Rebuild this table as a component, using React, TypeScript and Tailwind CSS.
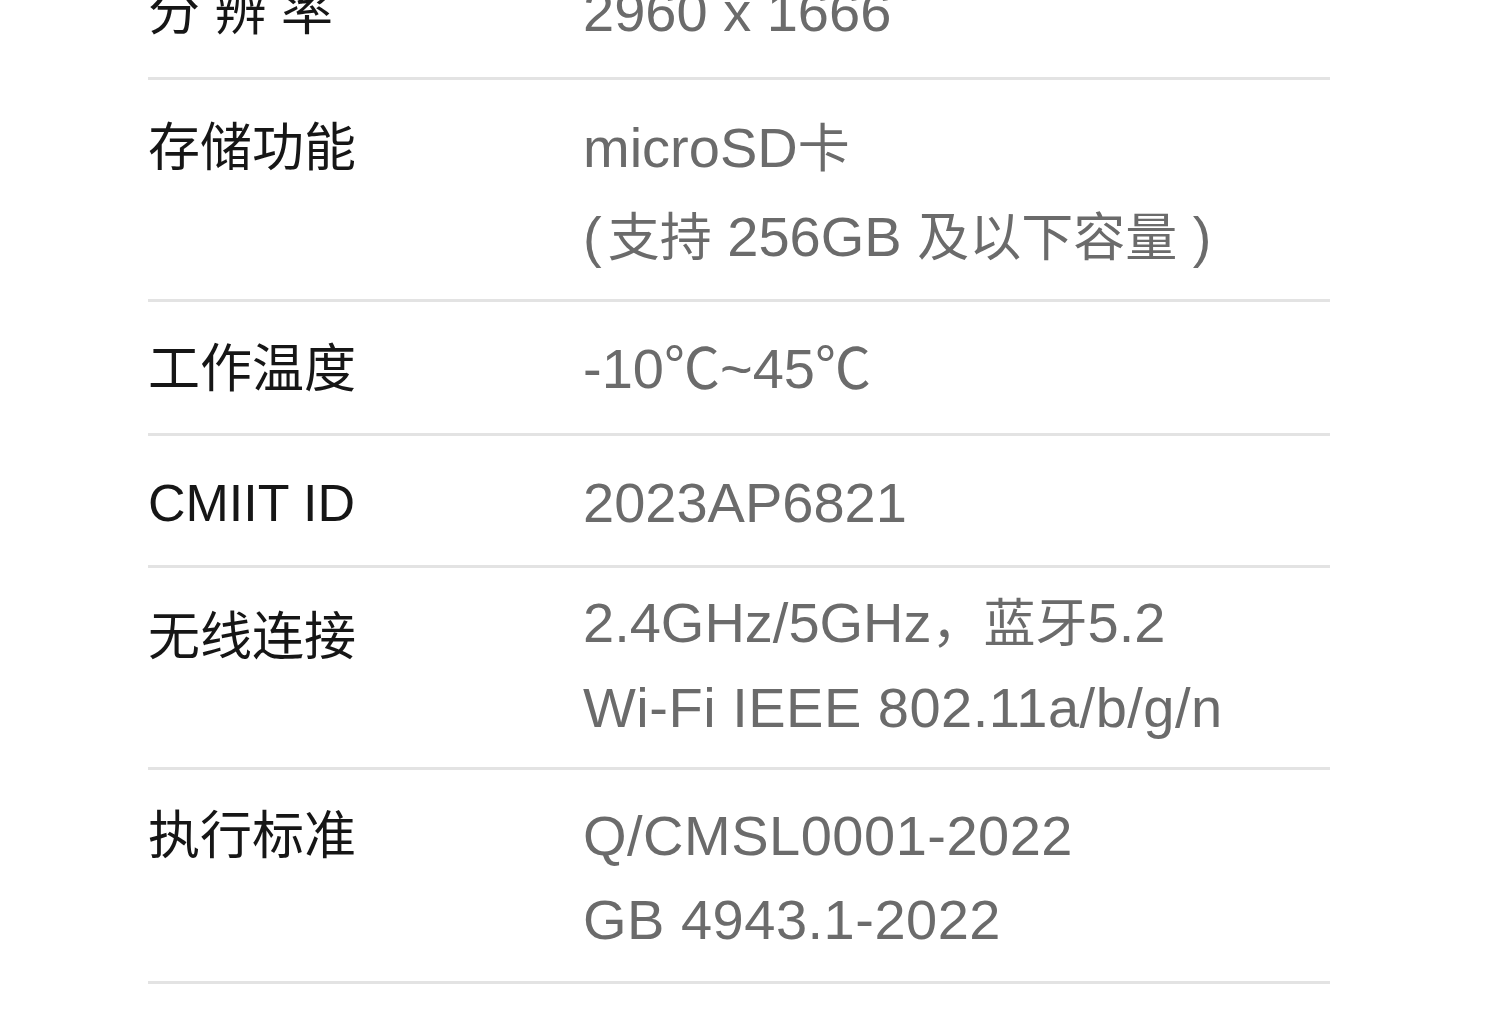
import React from "react";

type Row = {
  label: string;
  values: React.ReactNode[];
  h: string;
  lpt: string;
  vpt: string;
  lh: string;
};

const C = ({ children, cls = "" }: { children: React.ReactNode; cls?: string }) => (
  <span className={`text-[52px] ${cls}`}>{children}</span>
);

const rows: Row[] = [
  { label: "分 辨 率", values: ["2960 x 1666"], h: "h-[134px]", lpt: "pt-[36px]", vpt: "pt-[22px]", lh: "leading-[88px]" },
  {
    label: "存储功能",
    values: [
      <>microSD<C>卡</C></>,
      <>(<C cls="ml-[6px]">支持</C> 256GB <C>及以下容量</C> )</>,
    ],
    h: "h-[222px]", lpt: "pt-[38px]", vpt: "pt-[24px]", lh: "leading-[88px]",
  },
  { label: "工作温度", values: ["-10℃~45℃"], h: "h-[134px]", lpt: "pt-[37px]", vpt: "pt-[23px]", lh: "leading-[88px]" },
  { label: "CMIIT ID", values: ["2023AP6821"], h: "h-[132px]", lpt: "pt-[37px]", vpt: "pt-[23px]", lh: "leading-[88px]" },
  {
    label: "无线连接",
    values: [
      <>2.4GHz/5GHz<C>，蓝牙</C>5.2</>,
      <span className="tracking-[0.5px]">Wi-Fi IEEE 802.11a/b/g/n</span>,
    ],
    h: "h-[202px]", lpt: "pt-[39px]", vpt: "pt-[13px]", lh: "leading-[83px]",
  },
  {
    label: "执行标准",
    values: [
      <span className="tracking-[0.5px]">Q/CMSL0001-2022</span>,
      <span className="tracking-[0.5px]">GB 4943.1-2022</span>,
    ],
    h: "h-[214px]", lpt: "pt-[36px]", vpt: "pt-[24px]", lh: "leading-[84px]",
  },
];

export default function App() {
  return (
    <div className="w-[1500px] h-[1033px] overflow-hidden bg-white font-['Liberation_Sans','Noto_Sans_CJK_SC',sans-serif]">
      <div className="ml-[148px] w-[1182px] -mt-[54px]">
        {rows.map((r, i) => (
          <div key={i} className={`flex items-start border-b-[3px] border-[#e3e3e3] box-border ${r.h}`}>
            <div className={`w-[435px] shrink-0 text-[52px] leading-[60px] text-[#161616] whitespace-pre ${r.lpt}`}>
              {r.label}
            </div>
            <div className={`flex flex-col text-[56px] text-[#6b6b6b] whitespace-pre ${r.vpt} ${r.lh}`}>
              {r.values.map((v, j) => (
                <div key={j}>{v}</div>
              ))}
            </div>
          </div>
        ))}
      </div>
    </div>
  );
}
